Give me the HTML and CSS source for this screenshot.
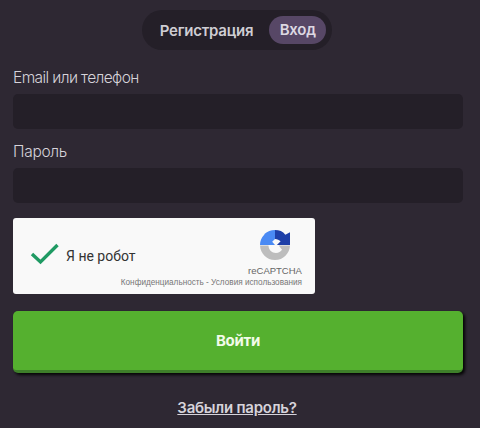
FILE: index.html
```html
<!DOCTYPE html>
<html lang="ru">
<head>
<meta charset="utf-8">
<title>Вход</title>
<link rel="stylesheet" href="styles.css">
</head>
<body>
<main class="page">
  <div class="tabs-row">
    <div class="tabs">
      <span class="tab">Регистрация</span>
      <span class="tab tab-active">Вход</span>
    </div>
  </div>
  <div class="field">
    <label class="label">Email или телефон</label>
    <div class="input"></div>
  </div>
  <div class="field field-second">
    <label class="label">Пароль</label>
    <div class="input"></div>
  </div>
  <div class="captcha">
    <svg class="check" width="30" height="22" viewBox="0 0 30 22"><path d="M2 11 L10.500 19 L27.500 2" fill="none" stroke="#1f9a63" stroke-width="3.400"/></svg>
    <span class="captcha-text">Я не робот</span>
    <div class="captcha-brand">
      <svg class="recaptcha-logo" width="30" height="30" viewBox="0 0 64 64">
        <path d="M10 8 C16 3 23 0 32 0 V19 L26 25 L32 32 H0 C0 24 3 16 9 10 Z" fill="#4a8af4"/>
        <path d="M32 0 C41 0 49 3 54 10 L64 5 V32 H36 L44 24 C41 21 37 19 32 19 Z" fill="#1e3fa8"/>
        <path d="M0 33 H18 C19 43 25 49 34 49 C40 49 44 46 47 42 L40 33 H64 C63 50 50 64 32 64 C14 64 1 50 0 33 Z" fill="#bdbdbd"/>
      </svg>
      <span class="brand-name">reCAPTCHA</span>
    </div>
    <span class="captcha-links">Конфиденциальность - Условия использования</span>
  </div>
  <button class="submit" type="button">Войти</button>
  <div class="forgot-row"><a class="forgot" href="#">Забыли пароль?</a></div>
</main>
</body>
</html>
```
FILE: styles.css
```css
* { box-sizing: border-box; }
html, body { margin: 0; height: 100%; }
body {
  background: #2e2833;
  font-family: Inter, "Noto Sans", sans-serif;
  overflow: hidden;
}
.page {
  width: 476px;
  padding: 10px 13px 0;
}
.tabs-row { display: flex; justify-content: center; padding-right: 2px; }
.tabs {
  display: flex;
  align-items: center;
  height: 40px;
  padding: 0 6px 0 18px;
  border-radius: 20px;
  background: #241f28;
  gap: 16px;
}
.tab {
  font-size: 15px;
  font-weight: 600;
  color: #cfcdd3;
  letter-spacing: -0.250px;
}
.tab-active {
  height: 28px;
  line-height: 28px;
  padding: 0 10.500px;
  border-radius: 14px;
  background: #574766;
  color: #ddd8e2;
}
.field { margin-top: 18px; }
.field-second { margin-top: 13px; }
.label {
  display: block;
  height: 26px;
  font-size: 15.500px;
  line-height: 20px;
  font-weight: 300;
  color: #d6d3da;
  letter-spacing: -0.600px;
}
.field-second .label { letter-spacing: -0.300px; }
.input {
  width: 450px;
  height: 35px;
  border-radius: 5px;
  background: #241f28;
}
.captcha {
  position: relative;
  display: flex;
  align-items: center;
  width: 302px;
  height: 76px;
  margin-top: 15px;
  padding-left: 17px;
  border-radius: 3px;
  background: #f9f9f9;
  font-family: "Liberation Sans", Arial, sans-serif;
}
.check { margin-top: -4px; }
.captcha-text {
  margin-left: 6px;
  font-family: Roboto, "Liberation Sans", sans-serif;
  font-size: 14px;
  color: #333;
}
.captcha-brand {
  position: absolute;
  top: 12px;
  left: 232px;
  width: 60px;
  display: flex;
  flex-direction: column;
  align-items: center;
}
.brand-name { margin-top: 5px; font-size: 9.500px; line-height: 12px; color: #666; }
.captcha-links {
  position: absolute;
  right: 13px;
  bottom: 6px;
  font-size: 8.200px;
  line-height: 10px;
  color: #777;
  white-space: nowrap;
}
.submit {
  display: block;
  width: 450px;
  height: 62px;
  margin-top: 17px;
  border: 0;
  border-bottom: 3px solid #3e7f2a;
  border-radius: 5px;
  background: #55b02f;
  box-shadow: 2px 2px 3px #050505;
  color: #f2fbe9;
  font-family: Inter, sans-serif;
  font-size: 15px;
  font-weight: 700;
  letter-spacing: -0.300px;
  padding: 0;
}
.forgot-row { display: flex; justify-content: center; margin-top: 26px; padding-right: 2px; }
.forgot {
  color: #d6d3da;
  font-size: 15px;
  font-weight: 600;
  line-height: 18px;
  letter-spacing: -0.250px;
  text-decoration: underline;
}
```
